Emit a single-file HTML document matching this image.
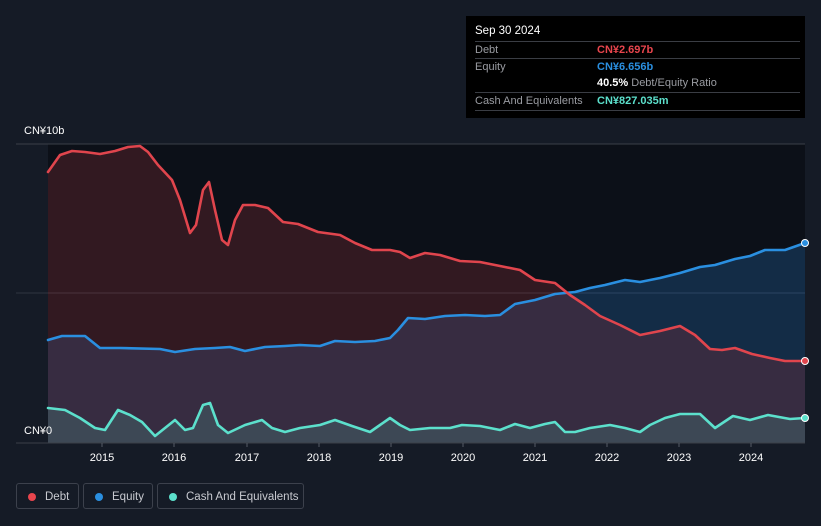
<!DOCTYPE html>
<html><head><meta charset="utf-8"><style>
body{margin:0;width:821px;height:526px;background:#151b26;font-family:"Liberation Sans",sans-serif;overflow:hidden;position:relative}
.tt{position:absolute;left:466px;top:16px;width:339px;height:102px;background:#000;color:#fff;font-size:11px}
.tt .h{position:absolute;left:9px;top:9px;font-size:11.5px}
.row{position:absolute;left:9px;width:325px;border-top:1px solid #3a3d44;height:17px;line-height:17px;color:#9a9ca2}
.row span{position:absolute;left:122px;font-weight:bold}
.leg{position:absolute;top:483px;height:26px;border:1px solid #3c414c;border-radius:3px;color:#c8cad0;font-size:11.5px;line-height:26px;box-sizing:border-box}
.leg i{position:absolute;left:11px;top:9px;width:8px;height:8px;border-radius:50%}
.ax{position:absolute;color:#fff;font-size:11px}
</style></head><body>
<svg width="821" height="526" style="position:absolute;left:0;top:0">
<rect x="48" y="144" width="757" height="299" fill="#0c1018"/>
<line x1="16" y1="144" x2="805" y2="144" stroke="#3a3f48"/>
<line x1="16" y1="293" x2="805" y2="293" stroke="#2e3440"/>
<polygon fill="rgba(35,110,180,0.3)" points="48,443 48,340 62,336 85,336 100,348 120,348 160,349 175,352 195,349 215,348 230,347 245,351 265,347 285,346 300,345 320,346 335,341 355,342 375,341 390,338 398,330 408,318 425,319 445,316 465,315 485,316 500,315 515,304 535,300 555,294 575,292 590,288 605,285 625,280 640,282 660,278 680,273 700,267 715,265 735,259 750,256 765,250 785,250 805,243 805,443"/>
<polygon fill="rgba(140,45,55,0.3)" points="48,443 48,172 60,155 72,151 85,152 100,154 115,151 128,147 140,146 148,152 158,165 172,180 180,200 190,233 196,225 203,190 209,182 215,210 222,240 228,245 235,220 243,205 255,205 268,208 283,222 298,224 318,232 340,235 355,243 372,250 390,250 400,252 410,258 425,253 440,255 460,261 480,262 500,266 520,270 535,280 555,283 570,295 585,305 600,316 620,325 640,335 660,331 680,326 695,335 710,349 722,350 735,348 752,354 770,358 785,361 805,361 805,443"/>
<polygon fill="rgba(90,200,180,0.18)" points="48,443 48,408 65,410 80,418 95,428 105,430 118,410 130,415 142,422 155,436 165,428 175,420 185,430 193,428 203,405 210,403 218,425 228,433 245,425 262,420 272,428 285,432 300,428 320,425 335,420 352,426 370,432 380,425 390,418 400,425 410,430 430,428 450,428 462,425 480,426 500,430 515,424 530,428 545,424 555,422 565,432 575,432 590,428 610,425 625,428 640,432 650,425 665,418 680,414 700,414 715,428 733,416 750,420 768,415 790,419 805,418 805,443"/>
<g fill="none" stroke-width="2.6" stroke-linejoin="round" stroke-linecap="round">
<polyline stroke="#2a8fe0" points="48,340 62,336 85,336 100,348 120,348 160,349 175,352 195,349 215,348 230,347 245,351 265,347 285,346 300,345 320,346 335,341 355,342 375,341 390,338 398,330 408,318 425,319 445,316 465,315 485,316 500,315 515,304 535,300 555,294 575,292 590,288 605,285 625,280 640,282 660,278 680,273 700,267 715,265 735,259 750,256 765,250 785,250 805,243"/>
<polyline stroke="#e0454d" points="48,172 60,155 72,151 85,152 100,154 115,151 128,147 140,146 148,152 158,165 172,180 180,200 190,233 196,225 203,190 209,182 215,210 222,240 228,245 235,220 243,205 255,205 268,208 283,222 298,224 318,232 340,235 355,243 372,250 390,250 400,252 410,258 425,253 440,255 460,261 480,262 500,266 520,270 535,280 555,283 570,295 585,305 600,316 620,325 640,335 660,331 680,326 695,335 710,349 722,350 735,348 752,354 770,358 785,361 805,361"/>
<polyline stroke="#5ce0cc" points="48,408 65,410 80,418 95,428 105,430 118,410 130,415 142,422 155,436 165,428 175,420 185,430 193,428 203,405 210,403 218,425 228,433 245,425 262,420 272,428 285,432 300,428 320,425 335,420 352,426 370,432 380,425 390,418 400,425 410,430 430,428 450,428 462,425 480,426 500,430 515,424 530,428 545,424 555,422 565,432 575,432 590,428 610,425 625,428 640,432 650,425 665,418 680,414 700,414 715,428 733,416 750,420 768,415 790,419 805,418"/>
</g>
<circle cx="805" cy="243" r="3.5" fill="#2a8fe0" stroke="#fff"/>
<circle cx="805" cy="361" r="3.5" fill="#e0454d" stroke="#fff"/>
<circle cx="805" cy="418" r="3.5" fill="#5ce0cc" stroke="#fff"/>
<line x1="16" y1="443" x2="805" y2="443" stroke="#3a3f48"/>
<g stroke="#555b66"><line x1="102" y1="443" x2="102" y2="447"/><line x1="174" y1="443" x2="174" y2="447"/><line x1="247" y1="443" x2="247" y2="447"/><line x1="319" y1="443" x2="319" y2="447"/><line x1="391" y1="443" x2="391" y2="447"/><line x1="463" y1="443" x2="463" y2="447"/><line x1="535" y1="443" x2="535" y2="447"/><line x1="607" y1="443" x2="607" y2="447"/><line x1="679" y1="443" x2="679" y2="447"/><line x1="751" y1="443" x2="751" y2="447"/></g>
<g fill="#fff" font-size="11" text-anchor="middle" font-family="Liberation Sans"><text x="102" y="461">2015</text><text x="174" y="461">2016</text><text x="247" y="461">2017</text><text x="319" y="461">2018</text><text x="391" y="461">2019</text><text x="463" y="461">2020</text><text x="535" y="461">2021</text><text x="607" y="461">2022</text><text x="679" y="461">2023</text><text x="751" y="461">2024</text></g>
</svg>
<div class="ax" style="left:24px;top:125px">CN¥10b</div>
<div class="ax" style="left:24px;top:425px">CN¥0</div>
<div class="tt"><div class="h">Sep 30 2024</div>
<div class="row" style="top:25px">Debt<span style="color:#e8454d">CN¥2.697b</span></div>
<div class="row" style="top:42px">Equity<span style="color:#2a8fe0">CN¥6.656b</span></div>
<div class="row" style="top:59px;border-top:none"><span style="color:#fff">40.5% <b style="color:#9a9ca2;font-weight:normal">Debt/Equity Ratio</b></span></div>
<div class="row" style="top:76px">Cash And Equivalents<span style="color:#5ce0cc">CN¥827.035m</span></div>
<div class="row" style="top:94px;height:0"></div>
</div>
<div class="leg" style="left:16px;width:63px"><i style="background:#e8454d"></i><span style="position:absolute;left:28px">Debt</span></div>
<div class="leg" style="left:83px;width:70px"><i style="background:#2a8fe0"></i><span style="position:absolute;left:28px">Equity</span></div>
<div class="leg" style="left:157px;width:147px"><i style="background:#5ce0cc"></i><span style="position:absolute;left:28px">Cash And Equivalents</span></div>
</body></html>
